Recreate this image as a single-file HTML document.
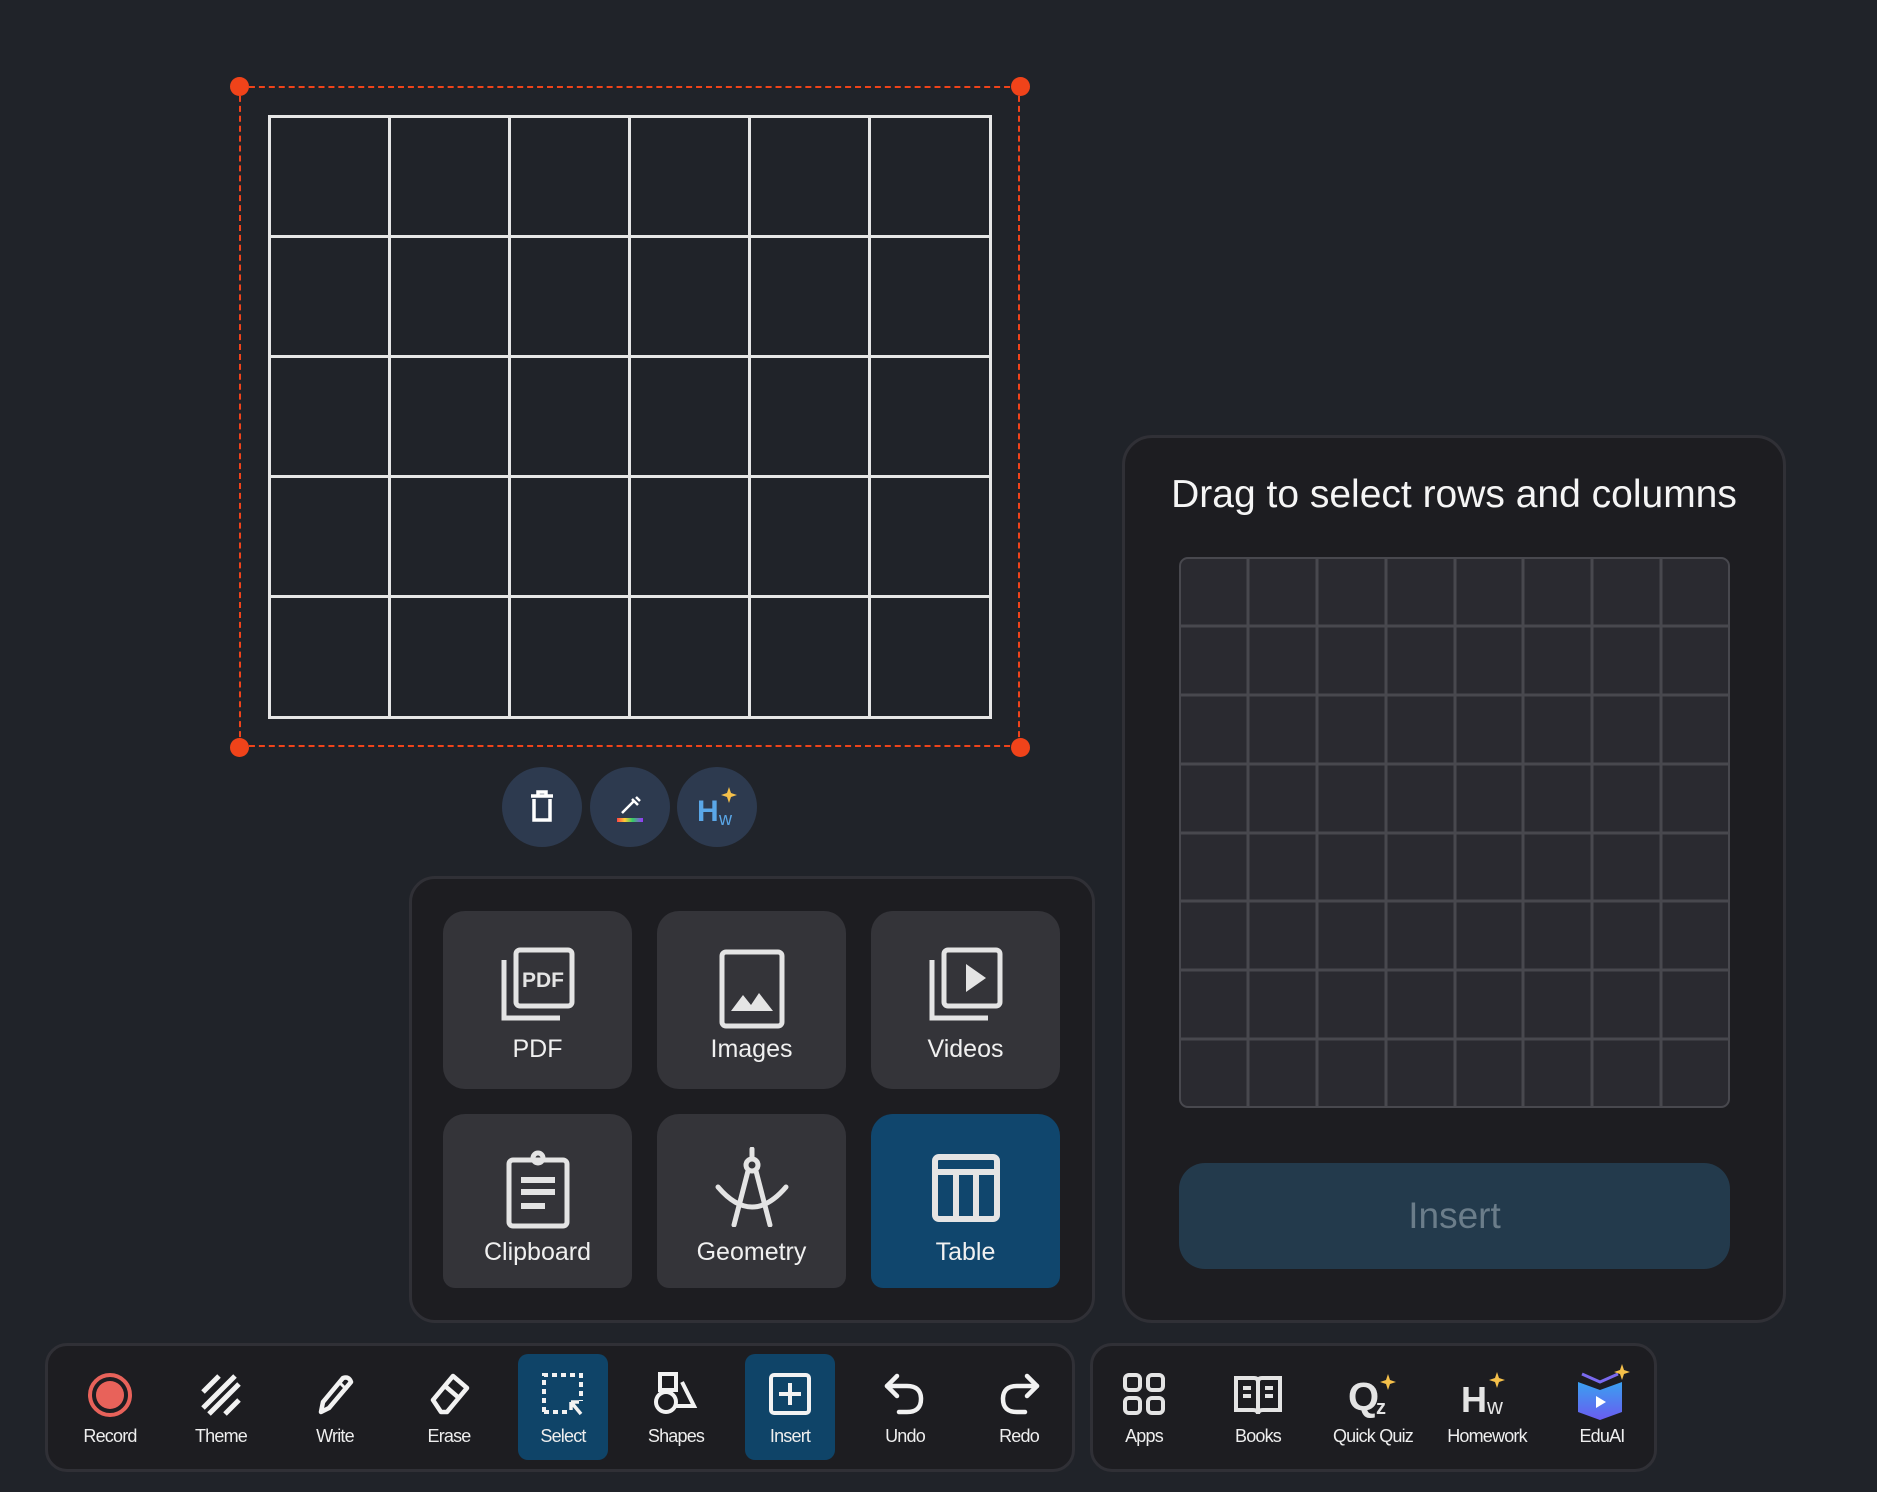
<!DOCTYPE html>
<html><head><meta charset="utf-8"><style>
*{box-sizing:border-box;margin:0;padding:0}
body{width:1877px;height:1492px;background:#202329;font-family:"Liberation Sans",sans-serif;position:relative;overflow:hidden;color:#fff}
.abs{position:absolute}
.tile{position:absolute;width:189px;background:#343439;border-radius:22px;text-align:center;font-size:25px;color:#f0f0f0}
.tile svg{position:absolute;left:50%;transform:translateX(-50%)}
.tile span{position:absolute;left:0;right:0;bottom:25px}
.tile.b span{bottom:21px}
.bar{position:absolute;background:#1d1d21;border:3px solid #303036;border-radius:22px}
.it{position:absolute;width:90px;height:106px;top:1354px;text-align:center;font-size:18px;color:#eee;border-radius:10px}
.it svg{position:absolute;left:50%;top:18px;transform:translateX(-50%)}
.it span{position:absolute;left:-20px;right:-20px;top:72px;letter-spacing:-.8px}
.sel{background:#0f4468}
.circ{position:absolute;width:80px;height:80px;border-radius:50%;background:#2d3a4f;top:767px}
.circ svg{position:absolute;left:20px;top:20px}
</style></head><body>

<div class="abs" style="left:239px;top:86px;width:781px;height:661px;border:2.5px dashed #f0431a"></div>
<div class="abs" style="left:230px;top:77px;width:19px;height:19px;border-radius:50%;background:#f0431a"></div>
<div class="abs" style="left:1011px;top:77px;width:19px;height:19px;border-radius:50%;background:#f0431a"></div>
<div class="abs" style="left:230px;top:738px;width:19px;height:19px;border-radius:50%;background:#f0431a"></div>
<div class="abs" style="left:1011px;top:738px;width:19px;height:19px;border-radius:50%;background:#f0431a"></div>

<svg class="abs" style="left:268px;top:115px" width="724" height="604">
<g stroke="#e6e6e6" stroke-width="3" fill="none">
<rect x="1.5" y="1.5" width="721" height="601"/>
<line x1="121.5" y1="0" x2="121.5" y2="604"/><line x1="241.5" y1="0" x2="241.5" y2="604"/><line x1="361.5" y1="0" x2="361.5" y2="604"/><line x1="481.5" y1="0" x2="481.5" y2="604"/><line x1="601.5" y1="0" x2="601.5" y2="604"/>
<line x1="0" y1="121.5" x2="724" y2="121.5"/><line x1="0" y1="241.5" x2="724" y2="241.5"/><line x1="0" y1="361.5" x2="724" y2="361.5"/><line x1="0" y1="481.5" x2="724" y2="481.5"/>
</g></svg>

<div class="circ" style="left:502px"><svg width="40" height="40" viewBox="0 0 40 40" fill="none" stroke="#fff" stroke-width="3.5"><path d="M9 9h22M16 9V5h8v4M12 12v21h16V12"/></svg></div>
<div class="circ" style="left:590px"><svg width="40" height="40" viewBox="0 0 40 40" fill="none"><path d="M12 26l12-12M22 12l6 6M26 10l4 4" stroke="#fff" stroke-width="2.5"/><rect x="7" y="31" width="26" height="4" fill="url(#rb)"/><defs><linearGradient id="rb"><stop offset="0" stop-color="#f44"/><stop offset=".3" stop-color="#fc3"/><stop offset=".6" stop-color="#3c6"/><stop offset="1" stop-color="#93f"/></linearGradient></defs></svg></div>
<div class="circ" style="left:677px"><svg width="44" height="44" viewBox="0 0 44 44"><text x="0" y="34" font-family="Liberation Sans" font-weight="bold" font-size="30" fill="#5aa7e8">H</text><text x="22" y="38" font-family="Liberation Sans" font-size="18" fill="#5aa7e8">w</text><path d="M32 0l2 6 6 2-6 2-2 6-2-6-6-2 6-2z" fill="#f5c04a"/></svg></div>

<div class="abs" style="left:409px;top:876px;width:686px;height:447px;background:#1d1d21;border:3px solid #303036;border-radius:26px;overflow:hidden"></div>
<div class="tile" style="left:443px;top:911px;height:178px"><svg style="top:35px" width="76" height="76" viewBox="0 0 76 76" fill="none" stroke="#e4e4e4" stroke-width="5"><path d="M4 14v58h56"/><rect x="16" y="4" width="56" height="56" rx="4"/><text x="22" y="41" font-family="Liberation Sans" font-weight="bold" font-size="21" fill="#e4e4e4" stroke="none">PDF</text></svg><span>PDF</span></div>
<div class="tile" style="left:657px;top:911px;height:178px"><svg style="top:38px" width="66" height="80" viewBox="0 0 66 80" fill="none"><rect x="3" y="3" width="60" height="74" rx="4" stroke="#e4e4e4" stroke-width="5"/><path d="M12 62l12-16 8 10 8-12 14 18z" fill="#e4e4e4"/></svg><span>Images</span></div>
<div class="tile" style="left:871px;top:911px;height:178px"><svg style="top:35px" width="76" height="76" viewBox="0 0 76 76" fill="none" stroke="#e4e4e4" stroke-width="5"><path d="M4 14v58h56"/><rect x="16" y="4" width="56" height="56" rx="4"/><path d="M38 18v28l20-14z" fill="#e4e4e4" stroke="none"/></svg><span>Videos</span></div>
<div class="tile b" style="left:443px;top:1114px;height:174px;border-radius:22px 22px 12px 12px"><svg style="top:36px" width="66" height="80" viewBox="0 0 66 80" fill="none" stroke="#e4e4e4" stroke-width="5"><rect x="4" y="10" width="58" height="66" rx="4"/><circle cx="33" cy="8" r="5"/><path d="M16 30h34M16 42h34M16 56h24" stroke-width="6"/></svg><span>Clipboard</span></div>
<div class="tile b" style="left:657px;top:1114px;height:174px;border-radius:22px 22px 12px 12px"><svg style="top:33px" width="76" height="80" viewBox="0 0 76 80" fill="none" stroke="#e4e4e4" stroke-width="5" stroke-linecap="round"><path d="M38 2v10"/><circle cx="38" cy="18" r="6"/><path d="M34 24l-14 54M42 24l14 54M4 40q34 40 68 0"/></svg><span>Geometry</span></div>
<div class="tile b" style="left:871px;top:1114px;height:174px;background:#10466d;border-radius:22px 22px 12px 12px"><svg style="top:40px" width="68" height="68" viewBox="0 0 68 68" fill="none" stroke="#e4e4e4" stroke-width="6"><rect x="3" y="3" width="62" height="62" rx="4"/><path d="M3 18h62M24 18v47M44 18v47"/></svg><span>Table</span></div>

<div class="abs" style="left:1122px;top:435px;width:664px;height:888px;background:#1d1d21;border:3px solid #303036;border-radius:30px"></div>
<div class="abs" style="left:1122px;top:473px;width:664px;text-align:center;font-size:39px;color:#f5f5f5">Drag to select rows and columns</div>
<svg class="abs" style="left:1179px;top:557px" width="551" height="551">
<rect x="1" y="1" width="549" height="549" rx="8" fill="#2a2a30" stroke="#48484e" stroke-width="2"/>
<g stroke="#48484e" stroke-width="3">
<line x1="69" y1="0" x2="69" y2="551"/><line x1="138" y1="0" x2="138" y2="551"/><line x1="207" y1="0" x2="207" y2="551"/><line x1="276" y1="0" x2="276" y2="551"/><line x1="344" y1="0" x2="344" y2="551"/><line x1="413" y1="0" x2="413" y2="551"/><line x1="482" y1="0" x2="482" y2="551"/>
<line y1="69" x1="0" y2="69" x2="551"/><line y1="138" x1="0" y2="138" x2="551"/><line y1="207" x1="0" y2="207" x2="551"/><line y1="276" x1="0" y2="276" x2="551"/><line y1="344" x1="0" y2="344" x2="551"/><line y1="413" x1="0" y2="413" x2="551"/><line y1="482" x1="0" y2="482" x2="551"/>
</g></svg>
<div class="abs" style="left:1179px;top:1163px;width:551px;height:106px;background:#233a4c;border-radius:26px;text-align:center;line-height:106px;font-size:37px;color:#6b7d8a">Insert</div>

<div class="bar" style="left:45px;top:1343px;width:1030px;height:129px"></div>
<div class="bar" style="left:1090px;top:1343px;width:567px;height:129px"></div>

<div class="it" style="left:65px"><svg width="46" height="46" viewBox="0 0 46 46"><circle cx="23" cy="23" r="20" fill="none" stroke="#e8625a" stroke-width="4"/><circle cx="23" cy="23" r="14" fill="#e8625a"/></svg><span>Record</span></div>
<div class="it" style="left:176px"><svg width="44" height="44" viewBox="0 0 44 44" stroke="#f2f2f2" stroke-width="5"><path d="M4 20L20 4M4 36L36 4M10 42L40 12M26 42l14-14"/></svg><span>Theme</span></div>
<div class="it" style="left:290px"><svg width="44" height="44" viewBox="0 0 44 44" fill="none" stroke="#f2f2f2" stroke-width="4.5" stroke-linejoin="round"><path d="M8 40l2-10L30 6q6-2 8 4L16 36z"/><path d="M26 10l8 8" stroke-width="3"/></svg><span>Write</span></div>
<div class="it" style="left:404px"><svg width="44" height="44" viewBox="0 0 44 44" fill="none" stroke="#f2f2f2" stroke-width="4.5" stroke-linejoin="round"><path d="M6 28L26 4l14 12-20 24h-6z"/><path d="M18 14l14 12"/></svg><span>Erase</span></div>
<div class="it sel" style="left:518px"><svg width="44" height="44" viewBox="0 0 44 44" fill="none" stroke="#f2f2f2" stroke-width="4" stroke-dasharray="5 4"><path d="M3 40V3h37v26M3 40h24"/><path d="M30 30l10 12M30 30h8M30 30v8" stroke-dasharray="none" stroke-width="3.5"/></svg><span>Select</span></div>
<div class="it" style="left:631px"><svg width="44" height="44" viewBox="0 0 44 44" fill="none" stroke="#f2f2f2" stroke-width="4"><rect x="6" y="2" width="16" height="16"/><circle cx="12" cy="30" r="10"/><path d="M28 10l12 24H20"/></svg><span>Shapes</span></div>
<div class="it sel" style="left:745px"><svg width="44" height="44" viewBox="0 0 44 44" fill="none" stroke="#f2f2f2" stroke-width="4"><rect x="3" y="3" width="38" height="38" rx="3"/><path d="M22 11v22M11 22h22"/></svg><span>Insert</span></div>
<div class="it" style="left:860px"><svg width="44" height="44" viewBox="0 0 44 44" fill="none" stroke="#f2f2f2" stroke-width="4.5" stroke-linecap="round" stroke-linejoin="round"><path d="M14 4L4 14l10 10"/><path d="M4 14h20q14 0 14 13t-14 13h-8"/></svg><span>Undo</span></div>
<div class="it" style="left:974px"><svg width="44" height="44" viewBox="0 0 44 44" fill="none" stroke="#f2f2f2" stroke-width="4.5" stroke-linecap="round" stroke-linejoin="round"><path d="M30 4l10 10-10 10"/><path d="M40 14H20Q6 14 6 27t14 13h8"/></svg><span>Redo</span></div>

<div class="it" style="left:1099px"><svg width="44" height="44" viewBox="0 0 44 44" fill="none" stroke="#e4e4e4" stroke-width="4"><rect x="3" y="3" width="15" height="15" rx="4"/><rect x="26" y="3" width="15" height="15" rx="4"/><rect x="3" y="26" width="15" height="15" rx="4"/><rect x="26" y="26" width="15" height="15" rx="4"/></svg><span>Apps</span></div>
<div class="it" style="left:1213px"><svg width="50" height="44" viewBox="0 0 50 44" fill="none" stroke="#e4e4e4" stroke-width="4"><path d="M3 6h18q4 0 4 4 0-4 4-4h18v32H30q-5 0-5 4 0-4-5-4H3z"/><path d="M25 10v30M10 16h8M10 24h8M32 16h8M32 24h8"/></svg><span>Books</span></div>
<div class="it" style="left:1328px"><svg width="50" height="48" viewBox="0 0 50 48"><text x="0" y="38" font-family="Liberation Sans" font-weight="bold" font-size="40" fill="#e4e4e4">Q</text><text x="28" y="42" font-family="Liberation Sans" font-weight="bold" font-size="20" fill="#e4e4e4">z</text><path d="M40 2l2 6 6 2-6 2-2 6-2-6-6-2 6-2z" fill="#f5c04a"/></svg><span>Quick Quiz</span></div>
<div class="it" style="left:1442px"><svg width="52" height="48" viewBox="0 0 52 48"><text x="0" y="40" font-family="Liberation Sans" font-weight="bold" font-size="36" fill="#e4e4e4">H</text><text x="26" y="42" font-family="Liberation Sans" font-size="22" fill="#e4e4e4">w</text><path d="M36 0l2 6 6 2-6 2-2 6-2-6-6-2 6-2z" fill="#f5c04a"/></svg><span>Homework</span></div>
<div class="it" style="left:1557px"><svg width="64" height="56" viewBox="0 0 64 56" style="top:10px"><defs><linearGradient id="eg" x1="0" y1="0" x2="0" y2="1"><stop offset="0" stop-color="#3aa0f0"/><stop offset="1" stop-color="#6a5cf0"/></linearGradient></defs><path d="M8 18l22 8 22-8v30l-22 8-22-8z" fill="url(#eg)"/><path d="M12 10l18 8 18-8" stroke="#7a6af0" stroke-width="3" fill="none"/><path d="M26 32l10 6-10 6z" fill="#fff"/><path d="M52 0l2 6 6 2-6 2-2 6-2-6-6-2 6-2z" fill="#f5c04a"/></svg><span>EduAI</span></div>
</body></html>
